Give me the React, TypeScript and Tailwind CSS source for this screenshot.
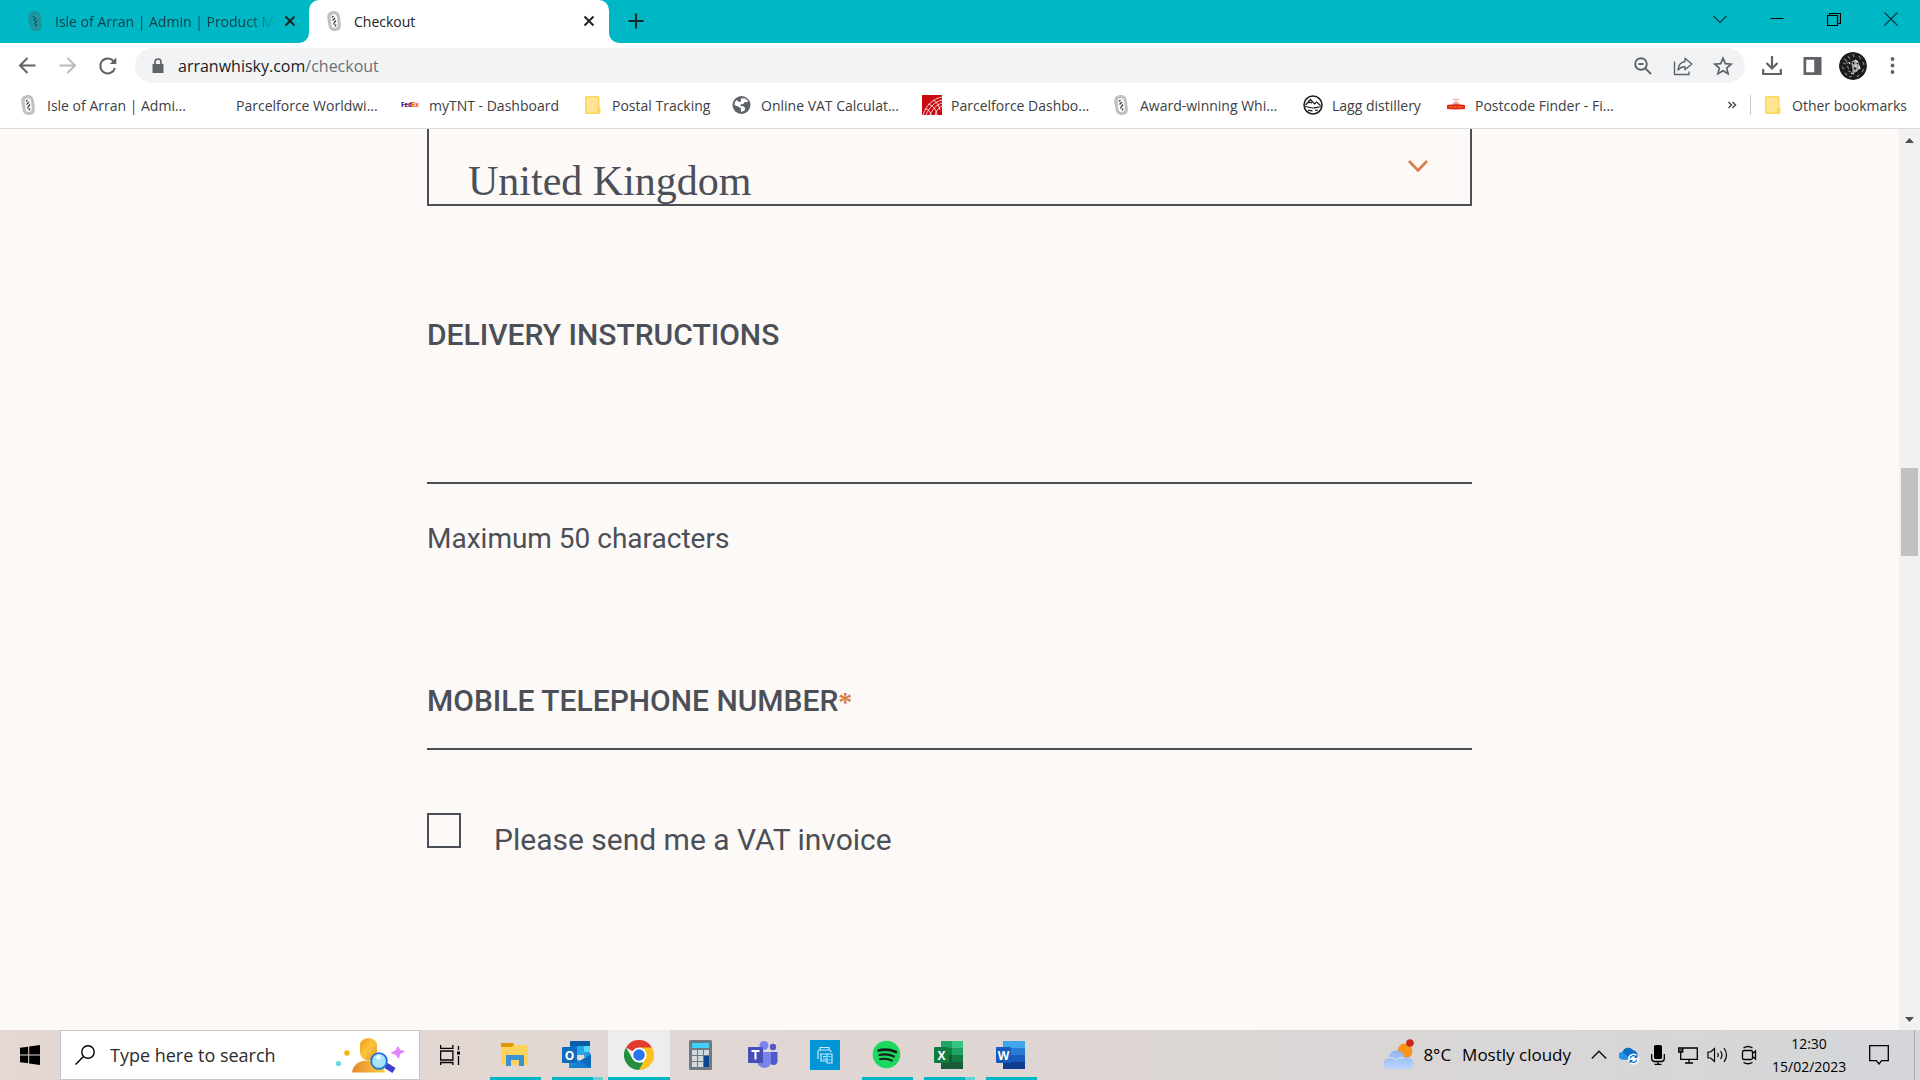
import React from "react";

const UI = "font-['Open_Sans','Noto_Sans',sans-serif]";

function ArranIcon({ dim = false }: { dim?: boolean }) {
  return (
    <svg viewBox="0 0 20 20" className="h-5 w-5 shrink-0" aria-hidden="true">
      <path d="M8 .2c5-.8 7.500 1.500 8 6l.8 7c.4 4.500-1.300 6.600-5 6.700-4.500.3-6.800-1.700-7.300-5.700L3.300 7C2.900 3 4.500.8 8 .2z" fill={dim ? "#1f949d" : "#c1c1c1"} />
      <path d="M9 3.300c2.500-.5 3.700.8 4 3l.7 6.500c.2 2.500-.6 4-2.500 4.200-2.200.2-3.500-1-3.700-3L6.700 7.500C6.400 5 7.200 3.700 9 3.300z" fill={dim ? "#1a9da8" : "#fff"} />
      <path d="M8 6.500l1.500-1.500M8.500 9.500L11 7M10 12l2-2.500M9.300 12.500l1.200 1M11 15.500l1-2" stroke={dim ? "#0f4f55" : "#3d3d3d"} strokeWidth="1.300" />
    </svg>
  );
}

function FolderIcon() {
  return (
    <svg viewBox="0 0 20 20" className="h-5 w-5 shrink-0" aria-hidden="true">
      <path d="M2 2.500A1.500 1.500 0 013.500 1h11.500A1.500 1.500 0 0116.500 2.500V12.500l1 1v4a1.500 1.500 0 01-1.500 1.500H3.500A1.500 1.500 0 012 17.500z" fill="#fbd65c" />
      <path d="M3.500 2.500H15V13h-1v4.500H3.500z" fill="#ffe591" />
    </svg>
  );
}

function FedexIcon() {
  return (
    <svg viewBox="0 0 20 20" className="h-5 w-5 shrink-0" aria-hidden="true">
      <text x="1" y="12" fontSize="6" fontWeight="800" fontFamily="Open Sans, sans-serif" fill="#4d148c">Fed<tspan fill="#ff6200">Ex</tspan></text>
    </svg>
  );
}

function GlobeIcon() {
  return (
    <svg viewBox="0 0 20 20" className="h-5 w-5 shrink-0" aria-hidden="true">
      <circle cx="9.500" cy="10" r="9" fill="#5f6368" />
      <path d="M9 3.200l4 .3c1.500.7 2.500 1.600 3.200 3l-2 .8-1.700-.4-.8 1.800-3 .8-.4 1.500 3.200.2 1.800 2-.8 2.300-3 1.500-.7-1.700.3-1.800-2.500-1.800L2.500 10c0-2 .8-3.800 2-5L7 7l1.800-.5.2-1.500z" fill="#fff" />
    </svg>
  );
}

function ParcelforceIcon() {
  return (
    <svg viewBox="0 0 20 20" className="h-5 w-5 shrink-0" aria-hidden="true">
      <path d="M0 0h20v20H0z" fill="#c80a0f" />
      <path d="M1 20C4 11 10 4 20 2M4 20C7 13 12 7 20 5M8 20c2-5 6-10 12-12M13 20c1-4 3-7 7-9M6 9c4 1 8 4 9 11M11 5c4 2 6 5 7 10M3 14c3 0 5 2 6 6" fill="none" stroke="#fff" strokeWidth=".8" />
    </svg>
  );
}

function LaggIcon() {
  return (
    <svg viewBox="0 0 20 20" className="h-5 w-5 shrink-0" aria-hidden="true" fill="none" stroke="#1d1d1f">
      <circle cx="10" cy="10" r="9" strokeWidth="1.500" />
      <path d="M2.500 10L7.500 4.500l4 4.500 2-2 4 3.500M5.500 8l2-.8 1.500 1" strokeWidth="1.200" />
      <path d="M1.500 11.500c4 0 5 1.500 8.500 1.500s5-1.500 8.500-1.200M5 15.500c2-.5 3 .3 4.500.3M12 15.300l3-.3" strokeWidth="1.200" />
    </svg>
  );
}

function RoyalMailIcon() {
  return (
    <svg viewBox="0 0 20 20" className="h-5 w-5 shrink-0" aria-hidden="true">
      <path d="M7 4h6v1.200H7zM9 6h2v1.500h2V10H7V7.500h2z" fill="#f0a294" />
      <path d="M1 10c6-1 12-1 18 0v4c-6 .6-12 .6-18 0z" fill="#e2231a" />
      <path d="M3 12h14" stroke="#f7961c" strokeWidth="1.200" strokeDasharray="2 .6" />
    </svg>
  );
}

const bookmarks: { label: string; icon: React.ReactNode; w: string }[] = [
  { label: "Isle of Arran | Admi...", icon: <ArranIcon />, w: "w-[189px]" },
  { label: "Parcelforce Worldwi...", icon: <span className="h-5 w-5 shrink-0" />, w: "w-[193px]" },
  { label: "myTNT - Dashboard", icon: <FedexIcon />, w: "w-[183px]" },
  { label: "Postal Tracking", icon: <FolderIcon />, w: "w-[149px]" },
  { label: "Online VAT Calculat...", icon: <GlobeIcon />, w: "w-[190px]" },
  { label: "Parcelforce Dashbo...", icon: <ParcelforceIcon />, w: "w-[189px]" },
  { label: "Award-winning Whi...", icon: <ArranIcon />, w: "w-[192px]" },
  { label: "Lagg distillery", icon: <LaggIcon />, w: "w-[143px]" },
  { label: "Postcode Finder - Fi...", icon: <RoyalMailIcon />, w: "w-[189px]" },
];

function CloseX() {
  return (
    <svg viewBox="0 0 12 12" className="h-3 w-3" aria-hidden="true">
      <path d="M1.500 1.500l9 9M10.500 1.500l-9 9" stroke="#202124" strokeWidth="1.900" />
    </svg>
  );
}

function TabStrip() {
  return (
    <header className="flex h-[43px] shrink-0 bg-[#00b7c6] text-[14px] text-[#202124]">
      <div className="flex w-[309px] items-center pb-px pl-[25px]">
        <ArranIcon dim />
        <span className="ml-[10px] w-[221px] overflow-hidden whitespace-nowrap text-[#123f45] [mask-image:linear-gradient(to_right,black_88%,transparent)]">Isle of Arran | Admin | Product Ma</span>
        <button aria-label="Close Isle of Arran tab" className="ml-2"><CloseX /></button>
      </div>
      <div className="relative flex w-[300px] items-center rounded-t-[10px] bg-white pb-px pl-[15px]">
        <svg viewBox="0 0 10 10" className="absolute bottom-0 -left-[10px] h-[10px] w-[10px]" aria-hidden="true"><path d="M10 0v10H0A10 10 0 0010 0z" fill="#fff" /></svg>
        <svg viewBox="0 0 10 10" className="absolute -right-[10px] bottom-0 h-[10px] w-[10px]" aria-hidden="true"><path d="M0 0v10h10A10 10 0 010 0z" fill="#fff" /></svg>
        <ArranIcon />
        <span className="ml-[10px] flex-1">Checkout</span>
        <button aria-label="Close Checkout tab" className="mr-[14px]"><CloseX /></button>
      </div>
      <button aria-label="New tab" className="ml-[19px] pb-px">
        <svg viewBox="0 0 16 16" className="h-4 w-4" aria-hidden="true"><path d="M8 .5v15M.5 8h15" stroke="#102c30" strokeWidth="2.200" /></svg>
      </button>
      <div className="mb-[6px] ml-auto flex items-center">
        <button aria-label="Search tabs" className="flex w-[57px] justify-center"><svg viewBox="0 0 14 14" className="h-[14px] w-[14px]"><path d="M.5 4l6.500 6.500L13.500 4" fill="none" stroke="#063237" strokeWidth="1.100" /></svg></button>
        <button aria-label="Minimise" className="flex w-[57px] justify-center"><svg viewBox="0 0 14 14" className="h-[14px] w-[14px]"><path d="M.5 6.500h13" stroke="#000" /></svg></button>
        <button aria-label="Restore" className="flex w-[57px] justify-center"><svg viewBox="0 0 14 14" className="h-[14px] w-[14px]"><path d="M.5 3.500h10v10H.5zM2.500 3.500v-2h11v10h-3" fill="none" stroke="#000" strokeWidth="1.200" /></svg></button>
        <button aria-label="Close window" className="flex w-[58px] justify-center"><svg viewBox="0 0 14 14" className="h-[14px] w-[14px]"><path d="M.5.5l13 13M13.500.5l-13 13" stroke="#063237" strokeWidth="1.100" /></svg></button>
      </div>
    </header>
  );
}

function Toolbar() {
  return (
    <div className="flex h-[45px] shrink-0 items-center bg-white pl-[17px] text-[#5f6368]">
      <button aria-label="Back" className="mr-5"><svg viewBox="0 0 20 20" className="h-5 w-5" fill="none" stroke="#5f6368" strokeWidth="2"><path d="M18.500 9.500H3M10.500 2L3 9.500l7.500 7.500" /></svg></button>
      <button aria-label="Forward" className="mr-5"><svg viewBox="0 0 20 20" className="h-5 w-5" fill="none" stroke="#b9bbbe" strokeWidth="2"><path d="M2.500 9.500H18M10.500 2L18 9.500 10.500 17" /></svg></button>
      <button aria-label="Reload" className="mr-[18px]"><svg viewBox="0 0 20 20" className="h-5 w-5" fill="none" stroke="#5f6368" strokeWidth="2"><path d="M16.500 5A7.500 7.500 0 1018 12" /><path d="M19.300 1.500V8h-6.500z" fill="#5f6368" stroke="none" /></svg></button>
      <div className="flex h-[35px] min-w-0 flex-1 items-center rounded-full bg-[#f1f3f4] pr-3 pl-[17px]">
        <svg viewBox="0 0 12 16" className="h-4 w-3 shrink-0" aria-hidden="true"><path d="M.5 6h11v9h-11z" fill="#5f6368" /><path d="M3 6.500V4a3 3 0 016 0v2.500" fill="none" stroke="#5f6368" strokeWidth="1.700" /></svg>
        <p className="ml-[14px] flex-1 text-[16px] leading-6 text-[#202124]">arranwhisky.com<span className="text-[#6b6f74]">/checkout</span></p>
        <button aria-label="Zoom" className="mr-5"><svg viewBox="0 0 20 20" className="h-5 w-5" fill="none" stroke="#5f6368" strokeWidth="1.900"><circle cx="8" cy="8" r="5.800" /><path d="M12.300 12.300L18 18M5.500 8h5" /></svg></button>
        <button aria-label="Share" className="mr-5"><svg viewBox="0 0 20 20" className="h-5 w-5" fill="none" stroke="#5f6368" strokeWidth="1.400"><path d="M1.500 5.500v13h14.500V15.500M12 2.200l6.800 5.800L12 13.800V10.800c-3 0-5 .8-7 3.200.5-5 3-8 7-8.500z" strokeLinejoin="round" /></svg></button>
        <button aria-label="Bookmark this page"><svg viewBox="0 0 20 20" className="h-5 w-5" fill="none" stroke="#5f6368" strokeWidth="1.700"><path d="M10 2.200l2.300 5.400 5.900.5-4.500 3.900 1.400 5.700-5.100-3-5.100 3L6.300 12 1.800 8.100l5.900-.5z" /></svg></button>
      </div>
      <button aria-label="Downloads" className="ml-[17px]"><svg viewBox="0 0 20 20" className="h-5 w-5" fill="none" stroke="#5f6368" strokeWidth="2.200"><path d="M10 0v12M4.500 7L10 12.500 15.500 7M1.200 13v5h17.600v-5" /></svg></button>
      <button aria-label="Side panel" className="ml-5"><svg viewBox="0 0 20 20" className="h-5 w-5"><path d="M1.500 1h18v18h-18zM4.200 3.700v12.600h8V3.700z" fill="#5f6368" fillRule="evenodd" /></svg></button>
      <button aria-label="Profile" className="ml-[17px]">
        <svg viewBox="0 0 28 28" className="h-7 w-7 rounded-full">
          <circle cx="14" cy="14" r="14" fill="#1c1c1c" />
          <path d="M13 9l4-1 3 3 1 5-3 4-4 1-2-5z" fill="#a9a9a9" />
          <path d="M5 7l3 2M9 4l2 3M14 2l1 3M20 4l2 3M24 10l1 3M25 17l-2 3M20 23l-2 2M13 24l-3 1M6 21l2 2M3 15l2 2M4 11l3 1M8 14l2 3M9 19l3 1M7 9l2 3" stroke="#7d7d7d" strokeWidth="1.300" />
          <path d="M14 10l1 2M18 12l1-1M15 16l2 1M12 13l1 6M20 19l-4 3" stroke="#111" strokeWidth="1.400" />
          <path d="M16 8l3 2M16 14l2-1M20 14l1 3M10 10l1 2M12 21l3 1" stroke="#f1f1f1" strokeWidth="1.200" />
        </svg>
      </button>
      <button aria-label="Menu" className="mr-[18px] ml-[15px]"><svg viewBox="0 0 20 20" className="h-5 w-5" fill="#5f6368"><circle cx="10.500" cy="3" r="1.900" /><circle cx="10.500" cy="9.500" r="1.900" /><circle cx="10.500" cy="16" r="1.900" /></svg></button>
    </div>
  );
}

function BookmarksBar() {
  return (
    <nav className="flex h-[41px] shrink-0 items-center border-b border-[#d9dbde] bg-white pb-[6px] pl-[18px] text-[14px] text-[#3c4043]">
      {bookmarks.map((b) => (
        <a key={b.label} href="#" className={"flex shrink-0 items-center gap-[9px] whitespace-nowrap " + b.w}>
          {b.icon}
          {b.label}
        </a>
      ))}
      <button aria-label="More bookmarks" className="ml-auto"><svg viewBox="0 0 10 10" className="h-[10px] w-[10px]" fill="none" stroke="#4a4e52" strokeWidth="1.500"><path d="M1.500 2L4.500 5l-3 3M5.500 2l3 3-3 3" /></svg></button>
      <span className="ml-[13px] h-5 w-px bg-[#c9cbce]" />
      <a href="#" className="mr-[13px] ml-3 flex items-center gap-[9px] whitespace-nowrap"><FolderIcon />Other bookmarks</a>
    </nav>
  );
}

function CheckoutForm() {
  return (
    <form className="mx-auto w-full max-w-[1045px] font-['Roboto',sans-serif] text-[#4b4f58]">
      <div className="relative border-2 border-t-0 border-[#4b4f58]">
        <select aria-label="Country" className="block h-[75px] w-full appearance-none bg-transparent pt-[29px] pl-[39px] font-['Liberation_Serif',serif] text-[42px] leading-[46px] outline-none">
          <option>United Kingdom</option>
        </select>
        <svg viewBox="0 0 20 12" className="pointer-events-none absolute top-[31px] right-[42px] h-3 w-5" aria-hidden="true"><path d="M1 1l9 9.500L19 1" fill="none" stroke="#d67f4b" strokeWidth="2.600" /></svg>
      </div>
      <label htmlFor="instructions" className="mt-[111px] block text-[30px] leading-9 font-medium">DELIVERY INSTRUCTIONS</label>
      <input id="instructions" type="text" maxLength={50} className="block h-[131px] w-full border-b-2 border-[#4b4f58] bg-transparent text-[30px] outline-none" />
      <p className="mt-[37px] text-[28px] leading-9">Maximum 50 characters</p>
      <label htmlFor="mobile" className="mt-[126px] block h-9 text-[30px] leading-9 font-medium">MOBILE TELEPHONE NUMBER<span className="font-['Liberation_Serif',serif] text-[28px] leading-6 font-bold text-[#d67f4b]">*</span></label>
      <input id="mobile" type="tel" className="block h-[31px] w-full border-b-2 border-[#4b4f58] bg-transparent text-[24px] outline-none" />
      <div className="mt-[63px] flex">
        <input id="vat" type="checkbox" className="h-[35px] w-[34px] appearance-none border-2 border-[#4b4f58]" />
        <label htmlFor="vat" className="mt-[9px] ml-[33px] text-[30px] leading-9">Please send me a VAT invoice</label>
      </div>
    </form>
  );
}

function Scrollbar() {
  return (
    <div className="flex w-[21px] shrink-0 flex-col items-center bg-[#f1f1f1]">
      <svg viewBox="0 0 21 22" className="h-[22px] w-[21px]"><path d="M6 14l4.500-5 4.500 5z" fill="#505050" /></svg>
      <div className="mt-[317px] h-[88px] w-[17px] bg-[#c1c1c1]" />
      <svg viewBox="0 0 21 22" className="mt-auto h-[22px] w-[21px]"><path d="M6 9l4.500 5L15 9z" fill="#505050" /></svg>
    </div>
  );
}

function ExplorerIcon() {
  return (
    <svg viewBox="0 0 30 30" className="h-[30px] w-[30px]">
      <path d="M1 3h12l2 3h-2v3H1z" fill="#dd9a00" /><path d="M1 7h11l2-2h14v20H1z" fill="#ffd35c" />
      <path d="M6 26V15h18v11h-5v-6h-8v6z" fill="#3a91d3" />
    </svg>
  );
}

function OfficeTile({ letter, tile }: { letter: string; tile: string }) {
  return (
    <>
      <rect x="0" y="7" width="15" height="16" rx="1" fill={tile} />
      <text x="7.500" y="19.500" textAnchor="middle" fontSize="12" fontWeight="700" fontFamily="Open Sans, sans-serif" fill="#fff">{letter}</text>
    </>
  );
}

function OutlookIcon() {
  return (
    <svg viewBox="0 0 30 30" className="h-[30px] w-[30px]">
      <path d="M8 1h20v14H8z" fill="#0a5ea8" /><path d="M8 6h7v9H8z" fill="#1272c4" /><path d="M15 6h7v9h-7z" fill="#28a8ea" /><path d="M22 6h6v6h-6z" fill="#50d9ff" /><path d="M22 12h6v5h-6z" fill="#2a9be0" />
      <path d="M7 15l11 6 11-7v14H7z" fill="#1590df" /><path d="M7 28l12-8 10 8z" fill="#1a7ed0" /><path d="M18 21l11-7v14z" fill="#0f69bd" />
      <OfficeTile letter="O" tile="#0f6cbd" />
    </svg>
  );
}

function ChromeIcon() {
  return (
    <svg viewBox="0 0 30 30" className="h-[30px] w-[30px]">
      <path d="M15 15L2 7.500A15 15 0 0128 7.500z" fill="#e33b2e" /><path d="M15 7.500h13A15 15 0 0115 30l6.500-11.200z" fill="#fcc31e" /><path d="M15 30A15 15 0 012 7.500l6.500 11.200L15 22.500h4.300z" fill="#23903f" />
      <circle cx="15" cy="15" r="7.500" fill="#fff" /><circle cx="15" cy="15" r="5.800" fill="#2a76f0" />
    </svg>
  );
}

function CalculatorIcon() {
  return (
    <svg viewBox="0 0 30 30" className="h-[30px] w-[30px]">
      <rect x="3" width="23" height="30" rx="1.500" fill="#6f7a83" /><path d="M6 3h17v5H6z" fill="#3fd0fb" />
      <path d="M6 10h5v5H6zM12 10h5v5h-5zM18 10h5v5h-5zM6 16h5v5H6zM12 16h5v5h-5zM6 22h5v5H6zM12 22h5v5h-5z" fill="#d2d9df" /><path d="M18 16h5v11h-5z" fill="#0c4590" />
    </svg>
  );
}

function TeamsIcon() {
  return (
    <svg viewBox="0 0 30 30" className="h-[30px] w-[30px]">
      <circle cx="25" cy="7" r="3.200" fill="#5059c9" /><path d="M20 12h9.500v9c0 4-4 5-7 3z" fill="#5059c9" />
      <circle cx="16" cy="5.500" r="4.500" fill="#7b83eb" /><path d="M9 12h14v9c0 9-12 9-14 1z" fill="#7b83eb" />
      <rect x="0" y="7" width="15" height="16" rx="1" fill="#464eb8" /><path d="M3.500 11h8M7.500 11v8.500" stroke="#fff" strokeWidth="2" />
    </svg>
  );
}

function PrinterIcon() {
  return (
    <svg viewBox="0 0 30 30" className="h-[30px] w-[30px]" fill="none" stroke="#c9ecfb" strokeWidth="1.200">
      <path d="M0 0h30v30H0z" fill="#0096d6" stroke="none" /><path d="M10 10V7.500h9V10M8 19V12q0-2 2-2h9q2 0 2 2M10 14h7M11 14v7h6M13 16.500h3M13 19h3M17 14h5v9h-5zM18.500 16.500h2M18.500 20h2" />
    </svg>
  );
}

function SpotifyIcon() {
  return (
    <svg viewBox="0 0 30 30" className="h-[30px] w-[30px]" fill="none" stroke="#14231a" strokeLinecap="round">
      <circle cx="14.500" cy="14.500" r="13.800" fill="#1ed760" stroke="none" /><path d="M6.500 10.500c6-1.500 12-1 17.500 1.500" strokeWidth="2.700" /><path d="M7.500 15c5-1.200 10-.7 14.500 1.500" strokeWidth="2.200" /><path d="M8 19.300c4.500-1 8.500-.5 12 1.300" strokeWidth="1.900" />
    </svg>
  );
}

function ExcelIcon() {
  return (
    <svg viewBox="0 0 30 30" className="h-[30px] w-[30px]">
      <path d="M7 1h11v7H7z" fill="#21a366" /><path d="M18 1h11v7H18z" fill="#33c481" /><path d="M7 8h11v7H7z" fill="#107c41" /><path d="M18 8h11v7H18z" fill="#21a366" /><path d="M7 15h11v7H7z" fill="#185c37" /><path d="M18 15h11v7H18z" fill="#107c41" /><path d="M7 22h22v7H7z" fill="#185c37" />
      <OfficeTile letter="X" tile="#107c41" />
    </svg>
  );
}

function WordIcon() {
  return (
    <svg viewBox="0 0 30 30" className="h-[30px] w-[30px]">
      <path d="M7 1h22v7H7z" fill="#41a5ee" /><path d="M7 8h22v7H7z" fill="#2b7cd3" /><path d="M7 15h22v7H7z" fill="#185abd" /><path d="M7 22h22v7H7z" fill="#103f91" />
      <OfficeTile letter="W" tile="#185abd" />
    </svg>
  );
}

const apps: { name: string; icon: React.ReactNode; state: "open" | "stack" | "active" | "none" }[] = [
  { name: "File Explorer", icon: <ExplorerIcon />, state: "open" },
  { name: "Outlook", icon: <OutlookIcon />, state: "stack" },
  { name: "Chrome", icon: <ChromeIcon />, state: "active" },
  { name: "Calculator", icon: <CalculatorIcon />, state: "none" },
  { name: "Teams", icon: <TeamsIcon />, state: "none" },
  { name: "Printer", icon: <PrinterIcon />, state: "none" },
  { name: "Spotify", icon: <SpotifyIcon />, state: "open" },
  { name: "Excel", icon: <ExcelIcon />, state: "stack" },
  { name: "Word", icon: <WordIcon />, state: "open" },
];

function SearchArt() {
  return (
    <svg viewBox="0 0 72 40" className="h-10 w-[72px] shrink-0" aria-hidden="true">
      <defs>
        <linearGradient id="person" x1="0" x2="1" y1="0" y2="1"><stop offset="0" stopColor="#f3981f" /><stop offset=".5" stopColor="#fbc63c" /><stop offset="1" stopColor="#e98a2b" /></linearGradient>
        <linearGradient id="body" x1="0" x2="1" y1="0" y2="0"><stop offset="0" stopColor="#e8872e" /><stop offset="1" stopColor="#fbd03f" /></linearGradient>
      </defs>
      <circle cx="12" cy="18" r="2.700" fill="#ffb005" /><circle cx="3.500" cy="28.500" r="2.600" fill="#66d9e8" />
      <path d="M17 37.500c1-7.500 6-12 16.500-12S49 30 50 37.500z" fill="url(#body)" />
      <path d="M25 10c0-9 17-9 17 0v7c0 11-17 11-17 0z" fill="url(#person)" />
      <path d="M51 30.500l8 5" stroke="#3d3fd0" strokeWidth="6" />
      <circle cx="44" cy="26" r="7.800" fill="#a9e3f8" stroke="#1673dc" strokeWidth="1.800" />
      <circle cx="43.500" cy="22" r="2.500" fill="#e9faff" />
      <path d="M63 12l1.500 3.500 4 1-4 2-1 4-2.500-3.500-4-1 4-2z" fill="#e184fa" stroke="#e184fa" strokeWidth="1.500" strokeLinejoin="round" />
    </svg>
  );
}

function Taskbar() {
  return (
    <footer className="flex h-[50px] shrink-0 items-stretch bg-linear-to-r from-[#e5d8d3] via-[#dfd6d3] to-[#d4d6d9] text-black">
      <button aria-label="Start" className="flex w-[60px] items-center justify-center"><svg viewBox="0 0 20 20" className="h-5 w-5"><path d="M0 2.800L8.200 1.700v7.800H0zM9.200 1.500L20 0v9.500H9.200zM0 10.500h8.200v7.800L0 17.200zM9.200 10.500H20V20L9.200 18.500z" /></svg></button>
      <label className="flex w-[360px] shrink-0 items-center border border-[#c8c8cc] bg-white pl-[14px]">
        <svg viewBox="0 0 20 20" className="h-5 w-5 shrink-0" fill="none" stroke="#000" strokeWidth="1.400"><circle cx="13" cy="7" r="6.200" /><path d="M8.500 11.500L.5 19.500" /></svg>
        <input type="text" aria-label="Search" placeholder="Type here to search" className="ml-[15px] w-0 flex-1 bg-transparent text-[18px] outline-none placeholder:text-[#2b2b2b]" />
        <span className="mr-3"><SearchArt /></span>
      </label>
      <button aria-label="Task view" className="flex w-[64px] items-center pl-5"><svg viewBox="0 0 20 20" className="h-5 w-5" fill="none" stroke="#000" strokeWidth="1.300"><path d="M.6 0v3.300h12.300V0M.6 6h12.300v9H.6zM.6 20v-2.500h12.300V20M18.500 1v4M18.500 11v9" /><path d="M17 6.500h3v3h-3z" fill="#000" stroke="none" /></svg></button>
      {apps.map((a) => (
        <button key={a.name} aria-label={a.name} className={"flex w-[62px] shrink-0 flex-col items-center pt-[10px] " + (a.state === "active" ? "bg-[#eeedee]" : "")}>
          {a.icon}
          {a.state === "active" && <span className="mt-auto h-[3px] w-full bg-[#00b7c3]" />}
          {a.state === "open" && <span className="mt-auto h-[3px] w-[51px] bg-[#00b7c3]" />}
          {a.state === "stack" && <span className="mt-auto flex h-[3px] w-[51px] bg-[#66d2d8]"><span className="w-[41px] bg-[#00b7c3]" /></span>}
        </button>
      ))}
      <div className="ml-auto flex items-center">
        <button className="mr-5 flex items-center text-[17px] whitespace-nowrap">
          <svg viewBox="0 0 32 32" className="mr-2 h-8 w-8">
            <defs><linearGradient id="cloud" x1="0" x2="0" y1="0" y2="1"><stop offset="0" stopColor="#8db4ef" /><stop offset="1" stopColor="#bcd4fb" /></linearGradient></defs>
            <circle cx="22" cy="12" r="7.500" fill="#f7941d" /><circle cx="27" cy="4" r="3.800" fill="#c9281d" />
            <path d="M6 30a5.500 5.500 0 01-.5-11c1-5 4-7.500 8-7.500s7 2.500 8 7c5-1 9 1.500 9 6 0 3.500-2.500 5.500-6 5.500z" fill="url(#cloud)" /><path d="M5.500 19c3-1 6 0 7 2 2-2 6-3 9-2" fill="none" stroke="#dbe8fd" strokeWidth="1" />
          </svg>
          <span>8°C</span><span className="ml-[11px]">Mostly cloudy</span>
        </button>
        <button aria-label="Hidden icons" className="mr-3"><svg viewBox="0 0 16 16" className="h-4 w-4" fill="none" stroke="#111" strokeWidth="1.500"><path d="M.8 11.500L8 4.300l7.200 7.200" /></svg></button>
        <button aria-label="OneDrive" className="mr-3"><svg viewBox="0 0 20 20" className="h-5 w-5"><path d="M3.500 14.500a4 4 0 010-7.500A6 6 0 0114 5c3 .5 4.500 3 4.500 5l-2 4.500z" fill="#0f6fc5" /><path d="M3 14.500a3.500 3.500 0 01.500-7.500l9 7.500z" fill="#1f93e8" /><circle cx="14.500" cy="14" r="5.500" fill="#fff" /><path d="M11.300 13.500a3.300 3.300 0 016-1.500M17.700 14.500a3.300 3.300 0 01-6 1.500M17.800 10v2.300h-2.300M11.200 18v-2.300h2.300" fill="none" stroke="#0f6fc5" strokeWidth="1.300" /></svg></button>
        <button aria-label="Microphone" className="mr-[13px]"><svg viewBox="0 0 14 20" className="h-5 w-[14px]"><rect x="3" width="8" height="14" rx="1.500" /><path d="M.7 9v4.500q0 3 3 3h6.600q3 0 3-3V9M7 16.500V19M3.500 19.300h7" fill="none" stroke="#000" strokeWidth="1.300" /></svg></button>
        <button aria-label="Network" className="mr-[9px]"><svg viewBox="0 0 20 20" className="h-5 w-5" fill="none" stroke="#000" strokeWidth="1.300"><path d="M5 3h14.300v11.300H2.700V8M11 14.500V17.500M7 18h8M.7 3h4v4h-4zM2.700 6v3M1.500 4.800h2.500" /></svg></button>
        <button aria-label="Volume" className="mr-3"><svg viewBox="0 0 22 20" className="h-5 w-[22px]" fill="none" stroke="#000" strokeWidth="1.200"><path d="M1 7h2.500L7.500 3.500v13L3.500 13H1zM10.500 8q1.500 2 0 4M13.500 6q3 4 0 8M17 3q5 7 0 14" /></svg></button>
        <button aria-label="Camera" className="mr-[15px]"><svg viewBox="0 0 16 20" className="h-5 w-4" fill="none" stroke="#000" strokeWidth="1.300"><path d="M3 5.500h7q1.500 0 1.500 1.500v6q0 1.500-1.500 1.500H3q-1.500 0-1.500-1.500V7q0-1.500 1.500-1.500zM11.500 8.500l3-2.500v8l-3-2.500M2.500 3Q7 0 11.500 3M2.500 17.500q4.500 2.500 9 0" /></svg></button>
        <button className="w-[74px] text-center text-[14px] leading-[23px]">12:30<br />15/02/2023</button>
        <button aria-label="Notifications" className="mr-[25px] ml-[23px]"><svg viewBox="0 0 20 22" className="h-[22px] w-5" fill="none" stroke="#000" strokeWidth="1.300"><path d="M.7 1.700h18.600v15h-6.600L10 20l-2.700-3.300H.7z" /></svg></button>
        <span className="mr-[5px] h-[50px] w-px bg-[#a9a9ab]" />
      </div>
    </footer>
  );
}

export default function App() {
  return (
    <div className={"flex h-screen flex-col overflow-hidden " + UI}>
      <TabStrip />
      <Toolbar />
      <BookmarksBar />
      <div className="flex min-h-0 flex-1 bg-[#fdf9f6]">
        <main className="min-w-0 flex-1 overflow-hidden"><CheckoutForm /></main>
        <Scrollbar />
      </div>
      <Taskbar />
    </div>
  );
}
